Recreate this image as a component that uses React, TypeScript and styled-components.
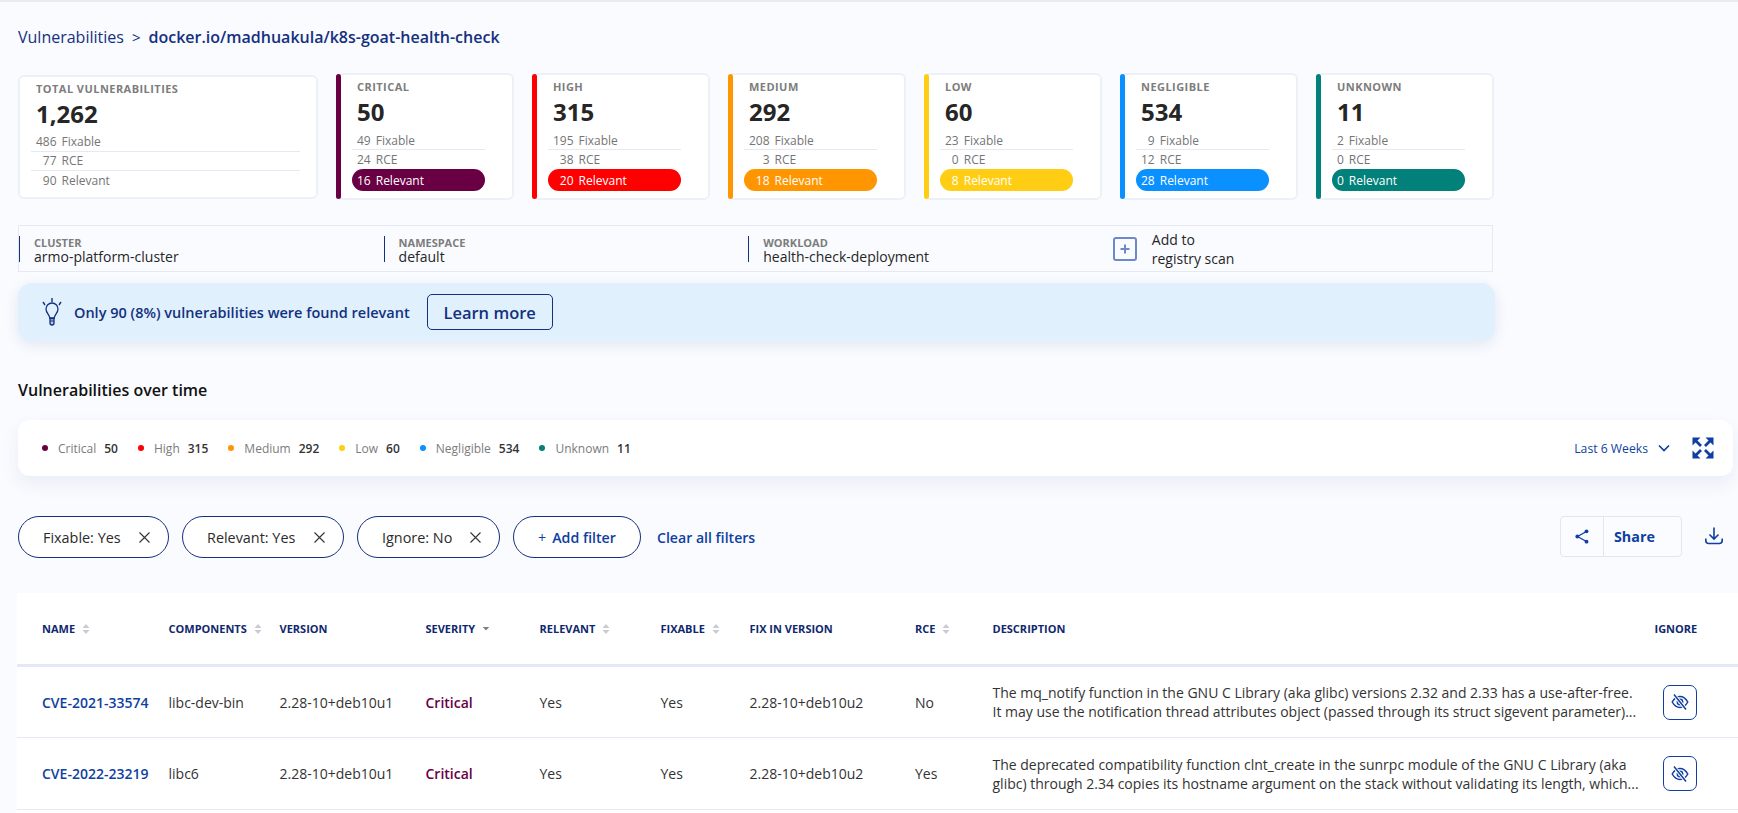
import React from "react";
import styled, { createGlobalStyle } from "styled-components";

const NAVY = "#14307f";
const BLUE = "#0f3fa0";
const LINE = "#e6e9f3";

const Global = createGlobalStyle`
  html, body { margin: 0; padding: 0; height: 100%; background: #f9fbff; overflow: hidden; }
  body { font-family: "Open Sans", "Liberation Sans", sans-serif; color: #2b2b2b; }
  * { box-sizing: border-box; }
`;

const Page = styled.div`
  border-top: 2px solid #e9ebf0;
  padding: 24px 0 0 18px;
  width: 1738px;
  height: 813px;
  overflow: hidden;
`;

const Breadcrumb = styled.div`
  display: flex;
  align-items: center;
  height: 22px;
  font-size: 16px;
  color: ${NAVY};
`;
const Crumb = styled.span<{ $current?: boolean }>`
  font-weight: ${(p) => (p.$current ? 600 : 400)};
`;
const CrumbSep = styled.span`
  margin: 0 8px;
  font-size: 15px;
`;

const Stats = styled.div`
  display: flex;
  align-items: center;
  gap: 18px;
  margin-top: 25px;
  width: 1476px;
`;
const Card = styled.div`
  display: flex;
  width: 178px;
  height: 127px;
  background: #fff;
  border: 2px solid #eef0f7;
  border-radius: 6px;
`;
const TotalCard = styled(Card)`
  width: 300px;
  height: 124px;
  padding: 5px 15px 0 11px;
`;
const SeverityBar = styled.div<{ $color: string }>`
  flex: none;
  width: 5px;
  margin: -1px 0 -1px -2px;
  border-radius: 3px;
  background: ${(p) => p.$color};
`;
const CardBody = styled.div`
  flex: 1;
  min-width: 0;
  padding: 5px 0 0 11px;
  width: 133px;
`;
const Stack = styled.div`
  width: 133px;
`;
const TotalStack = styled.div`
  width: 269px;
`;
const Label = styled.div`
  height: 14px;
  padding-left: 5px;
  font-size: 11px;
  line-height: 14px;
  font-weight: 700;
  letter-spacing: 0.45px;
  text-transform: uppercase;
  color: #7d7d7d;
  white-space: nowrap;
`;
const BigNumber = styled.div`
  height: 30px;
  margin: 3px 0 4px;
  padding-left: 5px;
  font-size: 24px;
  line-height: 30px;
  font-weight: 700;
  color: #262626;
`;
const StatRow = styled.div<{ $divider?: boolean }>`
  display: flex;
  align-items: center;
  height: 19px;
  padding-left: 5px;
  font-size: 12px;
  color: #757575;
  border-bottom: ${(p) => (p.$divider ? `1px solid ${LINE}` : "0")};
`;
const Pill = styled.div<{ $color: string }>`
  display: flex;
  align-items: center;
  height: 22px;
  padding-left: 5px;
  border-radius: 11px;
  background: ${(p) => p.$color};
  color: #fff;
  font-size: 12px;
  font-weight: 500;
`;
const Num = styled.span<{ $digits: number }>`
  display: inline-block;
  width: ${(p) => p.$digits}ch;
  text-align: right;
  margin-right: 5px;
`;

const InfoBar = styled.div`
  display: grid;
  grid-template-columns: repeat(4, 364.6px);
  align-items: center;
  width: 1475px;
  height: 47px;
  margin-top: 25px;
  border: 1px solid ${LINE};
`;
const InfoItem = styled.div`
  height: 26px;
  padding: 1px 0 0 14px;
  border-left: 1px solid ${NAVY};
  display: flex;
  flex-direction: column;
`;
const InfoLabel = styled.div`
  font-size: 11px;
  line-height: 12px;
  font-weight: 700;
  color: #7d7d7d;
`;
const InfoValue = styled.div`
  font-size: 14px;
  line-height: 15px;
  color: #262626;
`;
const AddScan = styled.div`
  display: flex;
  align-items: center;
  gap: 15px;
  font-size: 14px;
  line-height: 19px;
  color: #262626;
`;

const Banner = styled.div`
  display: flex;
  align-items: center;
  width: 1477px;
  height: 58px;
  margin-top: 11px;
  padding-left: 24px;
  background: #e0f0fd;
  border-radius: 14px;
  box-shadow: 0 4px 14px rgba(30, 50, 110, 0.1);
`;
const BannerText = styled.div`
  margin-left: 12px;
  font-size: 14.5px;
  font-weight: 600;
  color: ${NAVY};
  white-space: nowrap;
`;
const LearnMore = styled.button`
  margin-left: 17px;
  width: 126px;
  height: 36px;
  border: 1.5px solid ${NAVY};
  border-radius: 5px;
  background: transparent;
  font-family: inherit;
  font-size: 16.5px;
  font-weight: 600;
  color: ${NAVY};
`;

const Heading = styled.h2`
  margin: 39px 0 0;
  height: 20px;
  font-size: 16px;
  line-height: 20px;
  font-weight: 600;
  color: #111;
`;

const LegendCard = styled.div`
  display: flex;
  align-items: center;
  justify-content: space-between;
  width: 1715px;
  height: 56px;
  margin-top: 20px;
  padding: 0 19px 0 24px;
  background: #fff;
  border-radius: 12px;
  box-shadow: 0 8px 18px rgba(40, 60, 130, 0.07);
`;
const Legend = styled.div`
  display: flex;
  align-items: center;
  gap: 20px;
`;
const LegendItem = styled.div`
  display: flex;
  align-items: center;
  font-size: 12px;
  color: #7b7b7b;
`;
const Dot = styled.span<{ $color: string }>`
  width: 6px;
  height: 6px;
  margin-right: 10px;
  border-radius: 50%;
  background: ${(p) => p.$color};
`;
const LegendCount = styled.span`
  margin-left: 8px;
  font-weight: 600;
  color: #333;
`;
const RangeControls = styled.div`
  display: flex;
  align-items: center;
`;
const RangeLabel = styled.span`
  font-size: 12.2px;
  font-weight: 500;
  color: ${BLUE};
`;
const RangeChevron = styled.svg`
  margin: 0 22px 0 10px;
`;

const Filters = styled.div`
  display: flex;
  align-items: center;
  height: 42px;
  margin-top: 40px;
  width: 1705px;
`;
const Chip = styled.div<{ $width: number }>`
  display: flex;
  align-items: center;
  justify-content: space-between;
  width: ${(p) => p.$width}px;
  height: 42px;
  margin-right: 13px;
  padding: 0 18px 0 24px;
  border: 1px solid ${NAVY};
  border-radius: 21px;
  background: #fff;
  font-size: 14.4px;
  font-weight: 500;
  color: #2b2b2b;
  white-space: nowrap;
`;
const AddFilter = styled(Chip)`
  justify-content: center;
  gap: 6px;
  padding: 0;
  font-size: 14.2px;
  font-weight: 600;
  color: ${BLUE};
  margin-right: 16px;
`;
const PlusSign = styled.span`
  font-weight: 400;
`;
const ClearAll = styled.a`
  font-size: 14.1px;
  font-weight: 600;
  color: ${BLUE};
`;
const FilterActions = styled.div`
  display: flex;
  align-items: center;
  margin-left: auto;
  margin-top: -2px;
`;
const ShareButton = styled.div`
  display: flex;
  width: 122px;
  height: 41px;
  border: 1px solid #e3e6ee;
  border-radius: 4px;
  background: #fbfcff;
  margin-right: 23px;
`;
const ShareIcon = styled.div`
  display: flex;
  align-items: center;
  justify-content: center;
  width: 43px;
  border-right: 1px solid #e3e6ee;
`;
const ShareLabel = styled.div`
  display: flex;
  align-items: center;
  padding-left: 10px;
  font-size: 14.3px;
  font-weight: 700;
  color: ${BLUE};
`;

const TableBox = styled.div`
  margin: 35px 0 0 -1px;
  width: 1721px;
  background: #fff;
  padding-bottom: 10px;
`;
const COLUMNS = "126.5px 111px 146px 114px 121px 89px 165.5px 77.5px 662px 1fr";
const HeaderRow = styled.div`
  display: grid;
  grid-template-columns: ${COLUMNS};
  align-items: center;
  height: 74px;
  padding-left: 25px;
  border-bottom: 3px solid #e4e8f5;
`;
const HeaderCell = styled.div`
  display: flex;
  align-items: center;
  gap: 7px;
  font-size: 11px;
  font-weight: 700;
  color: #10286f;
  white-space: nowrap;
`;
const BodyRow = styled.div`
  display: grid;
  grid-template-columns: ${COLUMNS};
  align-items: center;
  height: 72px;
  padding-left: 25px;
  border-bottom: 1px solid ${LINE};
  font-size: 14px;
  color: #333;
  ${HeaderRow} + & {
    height: 71px;
  }
`;
const CveLink = styled.a`
  font-size: 14px;
  font-weight: 600;
  color: ${BLUE};
`;
const SeverityText = styled.span`
  font-weight: 600;
  color: #6a0044;
`;
const Description = styled.div`
  width: 650px;
  font-size: 14px;
  line-height: 19px;
`;
const IgnoreButton = styled.button`
  display: flex;
  align-items: center;
  justify-content: center;
  width: 34px;
  height: 35px;
  margin-left: 8px;
  padding: 0;
  border: 1px solid ${BLUE};
  border-radius: 7px;
  background: #fff;
`;

const SortIcon = ({ only }: { only?: boolean }) =>
  only ? (
    <svg width="8" height="12" viewBox="0 0 8 12" aria-hidden="true">
      <path d="M4 7.500 .8 4h6.400z" fill="#7d7f86" />
    </svg>
  ) : (
    <svg width="8" height="12" viewBox="0 0 8 12" aria-hidden="true">
      <path d="M4 1 7.500 5H.5z" fill="#c9ccd2" />
      <path d="M4 11 .5 7h7z" fill="#c9ccd2" />
    </svg>
  );

const Bulb = () => (
  <svg width="20" height="28" viewBox="0 0 20 28" fill="none" stroke={NAVY} aria-hidden="true">
    <path d="M10 0v4M1 4l2 3M19 4l-2 3" strokeWidth="1.400" />
    <path d="M7.700 20c0-3-3.700-5-3.700-9a6 6 0 0 1 12 0c0 4-3.700 6-3.700 9z" strokeWidth="1.300" />
    <path d="M8 20.500h4v4.500a2 2 0 0 1-4 0z" strokeWidth="1.300" fill="#b9c6e2" />
    <path d="M8 23h4" strokeWidth="1" />
  </svg>
);

const AddIcon = () => (
  <svg width="24" height="24" viewBox="0 0 24 24" fill="none" stroke="#6c8acb" strokeWidth="2" aria-hidden="true">
    <rect x="1" y="1" width="22" height="22" rx="2" />
    <path d="M12 7.500v9M7.500 12h9" />
  </svg>
);

const Expand = () => (
  <svg width="22" height="22" viewBox="0 0 22 22" fill={BLUE} stroke={BLUE} aria-hidden="true">
    <path d="M.5.5h8L.5 8.500zM21.500.5h-8l8 8zM.5 21.500v-8l8 8zM21.500 21.500h-8l8-8z" strokeWidth="0" />
    <path d="M3 3l6 6M19 3l-6 6M3 19l6-6M19 19l-6-6" strokeWidth="2.800" fill="none" />
  </svg>
);

const Chevron = () => (
  <RangeChevron width="12" height="8" viewBox="0 0 12 8" fill="none" stroke={BLUE} strokeWidth="1.700" aria-hidden="true">
    <path d="M1 1.500l5 5 5-5" />
  </RangeChevron>
);

const Close = () => (
  <svg width="11" height="11" viewBox="0 0 11 11" fill="none" stroke="#333" strokeWidth="1.100" aria-hidden="true">
    <path d="M.5.5l10 10M10.500.5l-10 10" />
  </svg>
);

const Share = () => (
  <svg width="14" height="15" viewBox="0 0 14 15" fill={BLUE} stroke={BLUE} aria-hidden="true">
    <path d="M11.500 2.500L2.500 7.500l9 5" fill="none" strokeWidth="1.300" />
    <circle cx="11.500" cy="2.300" r="1.900" strokeWidth="0" />
    <circle cx="2.300" cy="7.500" r="1.900" strokeWidth="0" />
    <circle cx="11.500" cy="12.700" r="1.900" strokeWidth="0" />
  </svg>
);

const Download = () => (
  <svg width="18" height="18" viewBox="0 0 18 18" fill="none" stroke={BLUE} strokeWidth="1.600" aria-hidden="true">
    <path d="M9 .5v11M4.500 7.500 9 12l4.500-4.500" />
    <path d="M.8 11.500v2c0 1.800 1.300 3 3 3h10.400c1.700 0 3-1.200 3-3v-2" />
  </svg>
);

const EyeOff = () => (
  <svg width="18" height="18" viewBox="0 0 18 18" fill="none" stroke={BLUE} strokeWidth="1.500" aria-hidden="true">
    <path d="M1.200 9C3.500 5 6.500 3.500 9 3.500S14.500 5 16.800 9c-2.300 4-5.300 5.500-7.800 5.500S3.500 13 1.200 9z" />
    <circle cx="9" cy="9" r="2.700" />
    <path d="M3 1.500l12 15" stroke="#fff" strokeWidth="3.500" />
    <path d="M3 1.500l12 15" />
  </svg>
);

type Severity = {
  name: string;
  color: string;
  count: string;
  fixable: string;
  rce: string;
  relevant: string;
};

const severities: Severity[] = [
  { name: "Critical", color: "#6a0044", count: "50", fixable: "49", rce: "24", relevant: "16" },
  { name: "High", color: "#ff0000", count: "315", fixable: "195", rce: "38", relevant: "20" },
  { name: "Medium", color: "#ff9500", count: "292", fixable: "208", rce: "3", relevant: "18" },
  { name: "Low", color: "#ffce14", count: "60", fixable: "23", rce: "0", relevant: "8" },
  { name: "Negligible", color: "#0a90ff", count: "534", fixable: "9", rce: "12", relevant: "28" },
  { name: "Unknown", color: "#02807a", count: "11", fixable: "2", rce: "0", relevant: "0" },
];

const headers: { label: string; sort?: "both" | "down" }[] = [
  { label: "NAME", sort: "both" },
  { label: "COMPONENTS", sort: "both" },
  { label: "VERSION" },
  { label: "SEVERITY", sort: "down" },
  { label: "RELEVANT", sort: "both" },
  { label: "FIXABLE", sort: "both" },
  { label: "FIX IN VERSION" },
  { label: "RCE", sort: "both" },
  { label: "DESCRIPTION" },
  { label: "IGNORE" },
];

const rows = [
  {
    cve: "CVE-2021-33574",
    component: "libc-dev-bin",
    rce: "No",
    description:
      "The mq_notify function in the GNU C Library (aka glibc) versions 2.32 and 2.33 has a use-after-free. It may use the notification thread attributes object (passed through its struct sigevent parameter)...",
  },
  {
    cve: "CVE-2022-23219",
    component: "libc6",
    rce: "Yes",
    description:
      "The deprecated compatibility function clnt_create in the sunrpc module of the GNU C Library (aka glibc) through 2.34 copies its hostname argument on the stack without validating its length, which...",
  },
];

const digitsOf = (s: Severity) => Math.max(s.fixable.length, s.rce.length, s.relevant.length);

export default function App() {
  return (
    <Page>
      <Global />
      <Breadcrumb>
        <Crumb>Vulnerabilities</Crumb>
        <CrumbSep>&gt;</CrumbSep>
        <Crumb $current>docker.io/madhuakula/k8s-goat-health-check</Crumb>
      </Breadcrumb>

      <Stats>
        <TotalCard>
          <TotalStack>
            <Label>Total vulnerabilities</Label>
            <BigNumber>1,262</BigNumber>
            <StatRow $divider><Num $digits={3}>486</Num>Fixable</StatRow>
            <StatRow $divider><Num $digits={3}>77</Num>RCE</StatRow>
            <StatRow><Num $digits={3}>90</Num>Relevant</StatRow>
          </TotalStack>
        </TotalCard>
        {severities.map((s) => (
          <Card key={s.name}>
            <SeverityBar $color={s.color} />
            <CardBody>
              <Stack>
                <Label>{s.name}</Label>
                <BigNumber>{s.count}</BigNumber>
                <StatRow $divider><Num $digits={digitsOf(s)}>{s.fixable}</Num>Fixable</StatRow>
                <StatRow><Num $digits={digitsOf(s)}>{s.rce}</Num>RCE</StatRow>
                <Pill $color={s.color}><Num $digits={digitsOf(s)}>{s.relevant}</Num>Relevant</Pill>
              </Stack>
            </CardBody>
          </Card>
        ))}
      </Stats>

      <InfoBar>
        <InfoItem>
          <InfoLabel>CLUSTER</InfoLabel>
          <InfoValue>armo-platform-cluster</InfoValue>
        </InfoItem>
        <InfoItem>
          <InfoLabel>NAMESPACE</InfoLabel>
          <InfoValue>default</InfoValue>
        </InfoItem>
        <InfoItem>
          <InfoLabel>WORKLOAD</InfoLabel>
          <InfoValue>health-check-deployment</InfoValue>
        </InfoItem>
        <AddScan>
          <AddIcon />
          <span>Add to<br />registry scan</span>
        </AddScan>
      </InfoBar>

      <Banner>
        <Bulb />
        <BannerText>Only 90 (8%) vulnerabilities were found relevant</BannerText>
        <LearnMore>Learn more</LearnMore>
      </Banner>

      <Heading>Vulnerabilities over time</Heading>

      <LegendCard>
        <Legend>
          {severities.map((s) => (
            <LegendItem key={s.name}>
              <Dot $color={s.color} />
              {s.name}
              <LegendCount>{s.count}</LegendCount>
            </LegendItem>
          ))}
        </Legend>
        <RangeControls>
          <RangeLabel>Last 6 Weeks</RangeLabel>
          <Chevron />
          <Expand />
        </RangeControls>
      </LegendCard>

      <Filters>
        <Chip $width={151}>Fixable: Yes<Close /></Chip>
        <Chip $width={162}>Relevant: Yes<Close /></Chip>
        <Chip $width={143}>Ignore: No<Close /></Chip>
        <AddFilter $width={128}><PlusSign>+</PlusSign>Add filter</AddFilter>
        <ClearAll>Clear all filters</ClearAll>
        <FilterActions>
          <ShareButton>
            <ShareIcon><Share /></ShareIcon>
            <ShareLabel>Share</ShareLabel>
          </ShareButton>
          <Download />
        </FilterActions>
      </Filters>

      <TableBox>
        <HeaderRow>
          {headers.map((h) => (
            <HeaderCell key={h.label}>
              {h.label}
              {h.sort && <SortIcon only={h.sort === "down"} />}
            </HeaderCell>
          ))}
        </HeaderRow>
        {rows.map((r) => (
          <BodyRow key={r.cve}>
            <CveLink>{r.cve}</CveLink>
            <div>{r.component}</div>
            <div>2.28-10+deb10u1</div>
            <SeverityText>Critical</SeverityText>
            <div>Yes</div>
            <div>Yes</div>
            <div>2.28-10+deb10u2</div>
            <div>{r.rce}</div>
            <Description>{r.description}</Description>
            <IgnoreButton aria-label="Ignore"><EyeOff /></IgnoreButton>
          </BodyRow>
        ))}
      </TableBox>
    </Page>
  );
}
